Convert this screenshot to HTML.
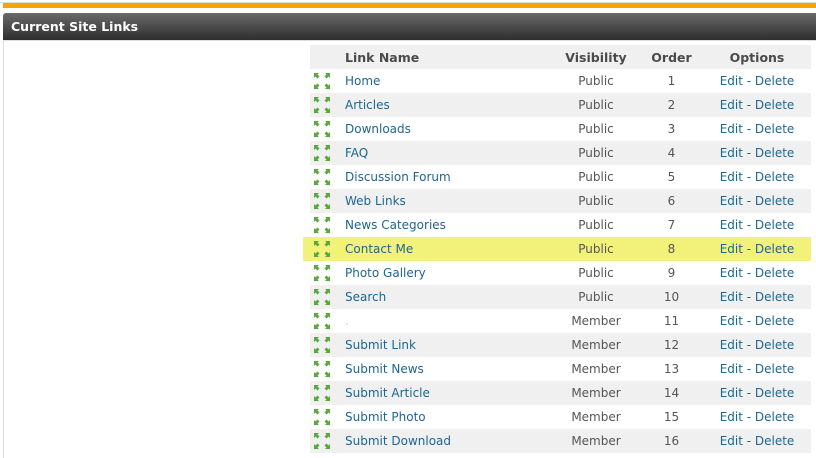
<!DOCTYPE html>
<html><head><style>
*{margin:0;padding:0;box-sizing:border-box}
body{width:816px;height:458px;overflow:hidden;background:#fff;font-family:"DejaVu Sans","Liberation Sans",sans-serif;position:relative}
.topline{position:absolute;left:0;top:0;width:816px;height:3px;border-bottom:1px solid #ddd}
.orange{position:absolute;left:3px;top:3px;width:813px;height:5px;background:#f5a30a}
.hdr{position:absolute;left:3px;top:13px;width:813px;height:27px;background:linear-gradient(#6a6a6a,#2e2e2e);border-radius:3px 0 0 0;color:#fff;font-weight:bold;font-size:12.5px;line-height:27px;padding-left:8px}
.box{position:absolute;left:3px;top:40px;width:813px;height:418px;border-left:1px solid #ddd;border-top:1px solid #ddd}
table{position:absolute;left:310px;top:45px;width:501px;border-collapse:collapse;font-size:12px;table-layout:fixed}
td,th{height:24px;padding:0;white-space:nowrap}
th{background:#f0f0f0;color:#4a4a4a;font-weight:bold;font-size:12.5px}
tr:nth-child(odd) td{background:#f0f0f0}
tr:nth-child(even) td{background:#fff}
.nm{text-align:left;color:#1d6592}
.vis{text-align:center;color:#555}
.ord{text-align:center;color:#555}
.op{text-align:center;color:#1d6592}
.hl{position:absolute;left:303px;top:237px;width:508px;height:24px;background:#f2f27a}
tr.h td{background:transparent!important}
</style></head><body>
<div class="topline"></div>
<div class="orange"></div>
<div class="hdr">Current Site Links</div>
<div class="box"></div>
<div class="hl"></div>
<svg width="0" height="0" style="position:absolute"><defs><g id="a" fill="#5aa83c"><path d="M1 1h5l-1.5 1.5 2 2-2 2-2-2L1 6z"/><path d="M17 1h-5l1.5 1.5-2 2 2 2 2-2L17 6z"/><path d="M1 17h5l-1.5-1.5 2-2-2-2-2 2L1 12z"/><path d="M17 17h-5l1.5-1.5-2-2 2-2 2 2 1.5-1.5z"/></g></defs></svg>
<table>
<colgroup><col style="width:35px"><col style="width:207px"><col style="width:88px"><col style="width:63px"><col style="width:108px"></colgroup>
<tr><th></th><th style="text-align:left">Link Name</th><th>Visibility</th><th>Order</th><th>Options</th></tr>
<tr><td><svg width="20" height="18" style="margin-left:3px;display:block"><use href="#a"/></svg></td><td class="nm">Home</td><td class="vis">Public</td><td class="ord">1</td><td class="op">Edit - Delete</td></tr>
<tr><td><svg width="20" height="18" style="margin-left:3px;display:block"><use href="#a"/></svg></td><td class="nm">Articles</td><td class="vis">Public</td><td class="ord">2</td><td class="op">Edit - Delete</td></tr>
<tr><td><svg width="20" height="18" style="margin-left:3px;display:block"><use href="#a"/></svg></td><td class="nm">Downloads</td><td class="vis">Public</td><td class="ord">3</td><td class="op">Edit - Delete</td></tr>
<tr><td><svg width="20" height="18" style="margin-left:3px;display:block"><use href="#a"/></svg></td><td class="nm">FAQ</td><td class="vis">Public</td><td class="ord">4</td><td class="op">Edit - Delete</td></tr>
<tr><td><svg width="20" height="18" style="margin-left:3px;display:block"><use href="#a"/></svg></td><td class="nm">Discussion Forum</td><td class="vis">Public</td><td class="ord">5</td><td class="op">Edit - Delete</td></tr>
<tr><td><svg width="20" height="18" style="margin-left:3px;display:block"><use href="#a"/></svg></td><td class="nm">Web Links</td><td class="vis">Public</td><td class="ord">6</td><td class="op">Edit - Delete</td></tr>
<tr><td><svg width="20" height="18" style="margin-left:3px;display:block"><use href="#a"/></svg></td><td class="nm">News Categories</td><td class="vis">Public</td><td class="ord">7</td><td class="op">Edit - Delete</td></tr>
<tr class="h"><td><svg width="20" height="18" style="margin-left:3px;display:block"><use href="#a"/></svg></td><td class="nm">Contact Me</td><td class="vis">Public</td><td class="ord">8</td><td class="op">Edit - Delete</td></tr>
<tr><td><svg width="20" height="18" style="margin-left:3px;display:block"><use href="#a"/></svg></td><td class="nm">Photo Gallery</td><td class="vis">Public</td><td class="ord">9</td><td class="op">Edit - Delete</td></tr>
<tr><td><svg width="20" height="18" style="margin-left:3px;display:block"><use href="#a"/></svg></td><td class="nm">Search</td><td class="vis">Public</td><td class="ord">10</td><td class="op">Edit - Delete</td></tr>
<tr><td><svg width="20" height="18" style="margin-left:3px;display:block"><use href="#a"/></svg></td><td class="nm" style="color:#ccc">.</td><td class="vis">Member</td><td class="ord">11</td><td class="op">Edit - Delete</td></tr>
<tr><td><svg width="20" height="18" style="margin-left:3px;display:block"><use href="#a"/></svg></td><td class="nm">Submit Link</td><td class="vis">Member</td><td class="ord">12</td><td class="op">Edit - Delete</td></tr>
<tr><td><svg width="20" height="18" style="margin-left:3px;display:block"><use href="#a"/></svg></td><td class="nm">Submit News</td><td class="vis">Member</td><td class="ord">13</td><td class="op">Edit - Delete</td></tr>
<tr><td><svg width="20" height="18" style="margin-left:3px;display:block"><use href="#a"/></svg></td><td class="nm">Submit Article</td><td class="vis">Member</td><td class="ord">14</td><td class="op">Edit - Delete</td></tr>
<tr><td><svg width="20" height="18" style="margin-left:3px;display:block"><use href="#a"/></svg></td><td class="nm">Submit Photo</td><td class="vis">Member</td><td class="ord">15</td><td class="op">Edit - Delete</td></tr>
<tr><td><svg width="20" height="18" style="margin-left:3px;display:block"><use href="#a"/></svg></td><td class="nm">Submit Download</td><td class="vis">Member</td><td class="ord">16</td><td class="op">Edit - Delete</td></tr>
</table>
</body></html>
